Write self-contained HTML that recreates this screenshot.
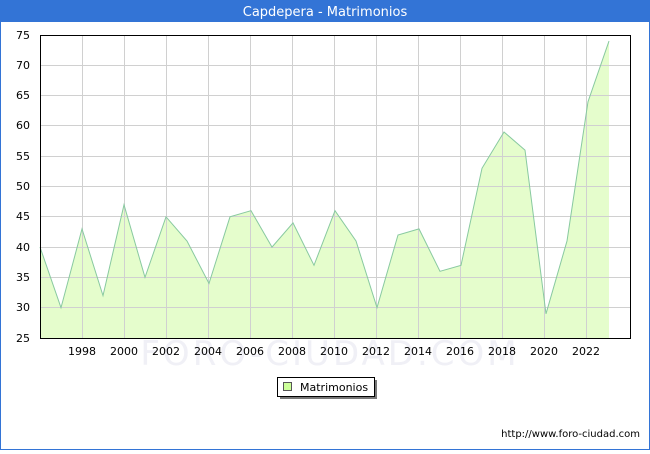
<!DOCTYPE html>
<html><head><meta charset="utf-8"><style>
body{margin:0;width:650px;height:450px;overflow:hidden;font-family:"DejaVu Sans","Liberation Sans",sans-serif;}
</style></head><body>
<svg width="650" height="450" xmlns="http://www.w3.org/2000/svg" font-family="DejaVu Sans, Liberation Sans, sans-serif">
<rect x="0" y="0" width="650" height="450" fill="#fff"/>
<rect x="0.5" y="0.5" width="649" height="449" fill="none" stroke="#3374d6" stroke-width="1"/>
<rect x="0" y="0" width="650" height="22" fill="#3374d6"/>
<text x="325" y="16" fill="#fff" font-size="13" text-anchor="middle">Capdepera - Matrimonios</text>
<text x="330" y="365" fill="#f0f0f6" font-size="34" text-anchor="middle" letter-spacing="3">FORO-CIUDAD.COM</text>
<polygon fill="#e5fdcc" points="40,338 40,247.1 61,307.7 82,228.9 103,295.6 124,204.7 145,277.4 166,216.8 187,241 209,283.5 230,216.8 251,210.7 272,247.1 293,222.9 314,265.3 335,210.7 356,241 377,307.7 398,235 419,228.9 440,271.3 461,265.3 482,168.3 504,132 525,150.1 546,313.8 567,241 588,101.7 609,41.1 609,338"/>
<g stroke="#d0d0d0" stroke-width="1">
<line x1="40" x2="630" y1="307.5" y2="307.5"/><line x1="40" x2="630" y1="277.5" y2="277.5"/><line x1="40" x2="630" y1="247.5" y2="247.5"/><line x1="40" x2="630" y1="216.5" y2="216.5"/><line x1="40" x2="630" y1="186.5" y2="186.5"/><line x1="40" x2="630" y1="156.5" y2="156.5"/><line x1="40" x2="630" y1="125.5" y2="125.5"/><line x1="40" x2="630" y1="95.5" y2="95.5"/><line x1="40" x2="630" y1="65.5" y2="65.5"/>
<line x1="82.5" x2="82.5" y1="35" y2="338"/><line x1="124.5" x2="124.5" y1="35" y2="338"/><line x1="166.5" x2="166.5" y1="35" y2="338"/><line x1="208.5" x2="208.5" y1="35" y2="338"/><line x1="250.5" x2="250.5" y1="35" y2="338"/><line x1="292.5" x2="292.5" y1="35" y2="338"/><line x1="334.5" x2="334.5" y1="35" y2="338"/><line x1="376.5" x2="376.5" y1="35" y2="338"/><line x1="418.5" x2="418.5" y1="35" y2="338"/><line x1="460.5" x2="460.5" y1="35" y2="338"/><line x1="502.5" x2="502.5" y1="35" y2="338"/><line x1="544.5" x2="544.5" y1="35" y2="338"/><line x1="586.5" x2="586.5" y1="35" y2="338"/>
</g>
<polyline fill="none" stroke="#88c9a0" stroke-width="1" points="40,247.1 61,307.7 82,228.9 103,295.6 124,204.7 145,277.4 166,216.8 187,241 209,283.5 230,216.8 251,210.7 272,247.1 293,222.9 314,265.3 335,210.7 356,241 377,307.7 398,235 419,228.9 440,271.3 461,265.3 482,168.3 504,132 525,150.1 546,313.8 567,241 588,101.7 609,41.1"/>
<rect x="40.5" y="35.5" width="590" height="303" fill="none" stroke="#000" stroke-width="1"/>
<g font-size="11" fill="#000" text-anchor="end">
<text x="30" y="342">25</text><text x="30" y="311">30</text><text x="30" y="281">35</text><text x="30" y="251">40</text><text x="30" y="220">45</text><text x="30" y="190">50</text><text x="30" y="160">55</text><text x="30" y="129">60</text><text x="30" y="99">65</text><text x="30" y="69">70</text><text x="30" y="39">75</text>
</g>
<g font-size="11" fill="#000" text-anchor="middle">
<text x="82" y="355">1998</text><text x="124" y="355">2000</text><text x="166" y="355">2002</text><text x="208" y="355">2004</text><text x="250" y="355">2006</text><text x="292" y="355">2008</text><text x="334" y="355">2010</text><text x="376" y="355">2012</text><text x="418" y="355">2014</text><text x="460" y="355">2016</text><text x="502" y="355">2018</text><text x="544" y="355">2020</text><text x="586" y="355">2022</text>
</g>
<rect x="280" y="380" width="97" height="19" fill="#777"/>
<rect x="277.5" y="377.5" width="97" height="19" fill="#fff" stroke="#000"/>
<rect x="283.5" y="382.5" width="8" height="8" fill="#ccff99" stroke="#555"/>
<text x="300" y="391" font-size="11">Matrimonios</text>
<text x="640" y="437" font-size="10" text-anchor="end">http://www.foro-ciudad.com</text>
</svg>
</body></html>
